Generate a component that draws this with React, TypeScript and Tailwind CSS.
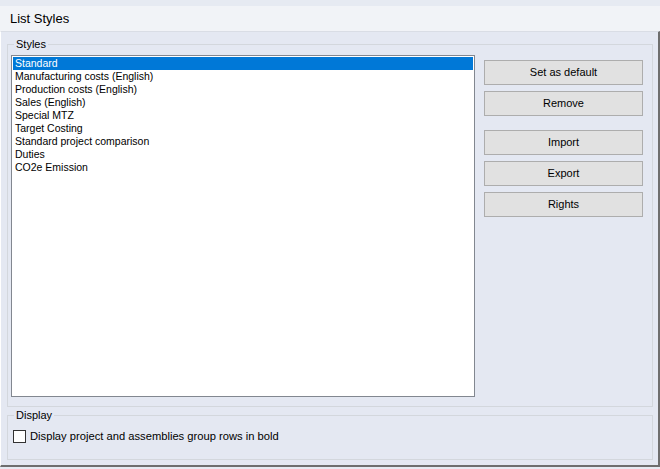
import React from 'react';

const styles = [
    'Standard',
    'Manufacturing costs (English)',
    'Production costs (English)',
    'Sales (English)',
    'Special MTZ',
    'Target Costing',
    'Standard project comparison',
    'Duties',
    'CO2e Emission',
];

function Btn({ label, className = '' }: { label: string; className?: string }) {
    return (
        <button className={`h-[25px] w-[159px] border border-[#adadad] bg-[#e1e1e1] text-[11px] text-black ${className}`}>
            {label}
        </button>
    );
}

export default function App() {
    return (
        <div className="flex h-[469px] w-[660px] flex-col bg-[#e6eaf2] pt-[6px] font-['Liberation_Sans',Arial,sans-serif] text-black">
            <div className="flex h-[25px] items-center bg-[#f1f3f7] pl-[10px] text-[13px]">List Styles</div>
            <div className="flex h-[436px] flex-col border-t border-b-2 border-r-2 border-t-[#d9dde5] border-b-[#6e6e6e] border-r-[#6e6e6e] border-l border-l-white bg-[#e4e8f2] pl-[6px] pr-[5px]">
                <fieldset className="mt-[6px] h-[369px] border border-[#d3d7dd] pl-[3px] pr-[8px]">
                    <legend className="ml-[3px] px-[2px] text-[11px] leading-[13px]">Styles</legend>
                    <div className="mt-[4px] flex gap-[9px]">
                        <div className="h-[342px] w-[464px] border border-[#828790] bg-white p-px text-[10.5px] leading-[13px]">
                            {styles.map((s, i) => (
                                <div key={s} className={`pl-[2px] ${i === 0 ? 'bg-[#0078d7] text-white' : ''}`}>{s}</div>
                            ))}
                        </div>
                        <div className="flex flex-col pt-[5px]">
                            <Btn label="Set as default" />
                            <Btn label="Remove" className="mt-[6px]" />
                            <Btn label="Import" className="mt-[14px]" />
                            <Btn label="Export" className="mt-[6px]" />
                            <Btn label="Rights" className="mt-[6px]" />
                        </div>
                    </div>
                </fieldset>
                <fieldset className="mt-[2px] h-[51px] border border-[#d3d7dd] pl-[5px]">
                    <legend className="ml-[1px] px-[2px] text-[11px] leading-[13px]">Display</legend>
                    <label className="mt-[6px] flex items-center gap-[4px] text-[11.2px]">
                        <span className="h-[13px] w-[13px] border border-[#333] bg-white" />
                        Display project and assemblies group rows in bold
                    </label>
                </fieldset>
            </div>
        </div>
    );
}
